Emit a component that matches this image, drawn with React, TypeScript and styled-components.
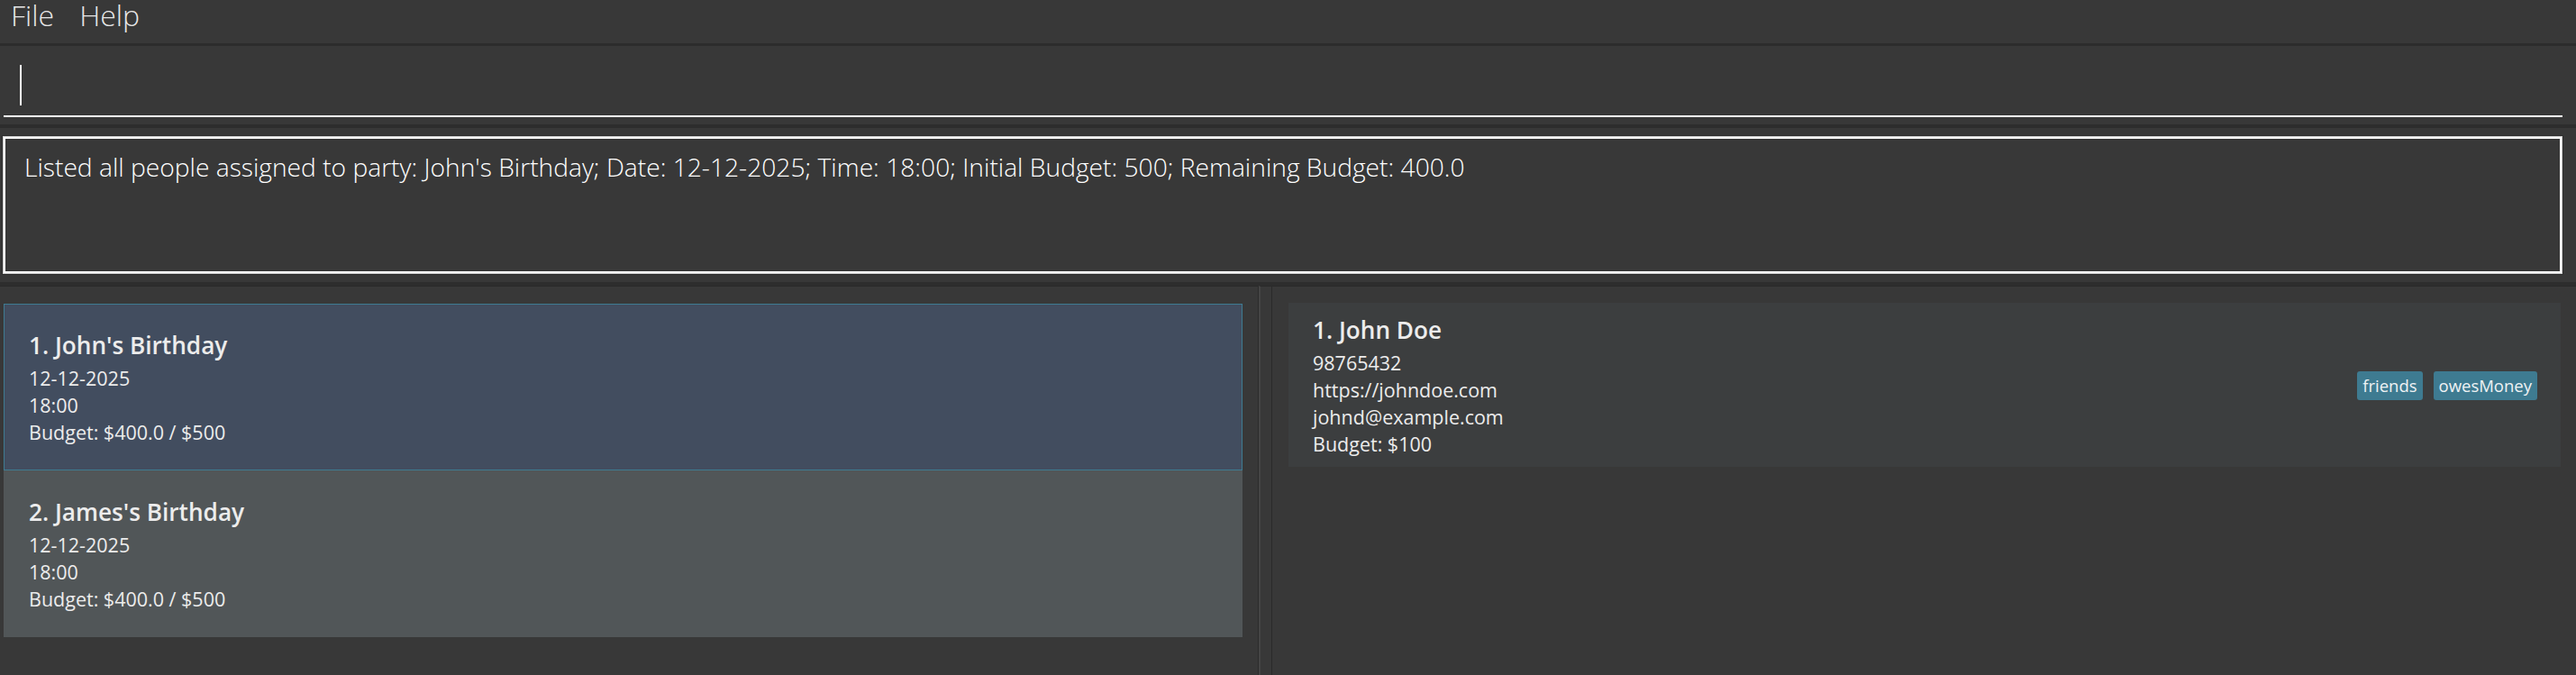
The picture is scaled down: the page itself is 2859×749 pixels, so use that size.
import React from "react";
import styled, { createGlobalStyle } from "styled-components";

const GlobalStyle = createGlobalStyle`
  html, body {
    margin: 0;
    padding: 0;
    background: #383838;
    overflow: hidden;
  }
  * { box-sizing: border-box; }
`;

const FONT = `"Open Sans", "Noto Sans", sans-serif`;

const Window = styled.div`
  width: 2859px;
  height: 749px;
  display: flex;
  flex-direction: column;
  background: #383838;
  font-family: ${FONT};
  color: #eeeeee;
`;

const MenuBar = styled.nav`
  height: 51px;
  flex: none;
  display: flex;
  align-items: flex-start;
  padding-left: 12px;
  border-bottom: 3px solid #2c2c2c;
`;

const MenuItem = styled.span`
  font-size: 32px;
  font-weight: 300;
  line-height: 34px;
  color: rgba(255, 255, 255, 0.9);
  margin-right: 28px;
`;

const CommandPane = styled.section`
  height: 91px;
  flex: none;
  display: flex;
  align-items: flex-end;
  padding: 0 15px 8px 4px;
  border-bottom: 4px solid #2d2d2d;
`;

const CommandField = styled.div`
  flex: 1;
  height: 70px;
  display: flex;
  align-items: center;
  padding-left: 18px;
  border-bottom: 2px solid #ffffff;
`;

const Caret = styled.span`
  width: 2px;
  height: 45px;
  background: #ffffff;
`;

const ResultPane = styled.section`
  height: 175px;
  flex: none;
  padding: 10px 16px 10px 4px;
  border-bottom: 4px solid #2d2d2d;
`;

const ResultBox = styled.div`
  height: 151px;
  border: 2px solid #ffffff;
  box-shadow: 0 0 0 1px #cfcfcf, 0 0 0 2px #2e2e2e;
  padding: 11px 0 0 21px;
  font-size: 28.2px;
  font-weight: 300;
  line-height: 40px;
  color: #ffffff;
  white-space: nowrap;
`;

const ListsArea = styled.main`
  flex: 1;
  display: flex;
  min-height: 0;
`;

const Panel = styled.section<{ $pad: string }>`
  flex: 1;
  display: flex;
  flex-direction: column;
  border-top: 1px solid #2a2a2a;
  padding: ${(p) => p.$pad};
`;

const LeftPanel = styled(Panel)`
  flex: none;
  width: 1397px;
  border-right: 1px solid #2c2c2c;
`;

const RightPanel = styled(Panel)`
  border-left: 1px solid #2a2a2a;
`;

const Divider = styled.div`
  width: 14px;
  flex: none;
  border-left: 2px solid #454545;
  border-top: 1px solid #2a2a2a;
`;

const PartyCard = styled.article<{ $variant: "selected" | "odd" }>`
  display: flex;
  flex-direction: column;
  padding: 27px 0 26px 27px;
  border: 1px solid
    ${(p) => (p.$variant === "selected" ? "#3e7b91" : "transparent")};
  background: ${(p) => (p.$variant === "selected" ? "#424d5f" : "#515658")};
`;

const PersonCard = styled.article`
  display: flex;
  align-items: center;
  padding: 12px 26px 10px 27px;
  background: #3c3e3f;
`;

const Info = styled.div`
  flex: 1;
  display: flex;
  flex-direction: column;
`;

const BigLabel = styled.div`
  font-size: 26.2px;
  font-weight: 600;
  line-height: 36px;
  color: #ececec;
  margin-bottom: 4px;
`;

const SmallLabel = styled.div`
  font-size: 21.5px;
  font-weight: 400;
  line-height: 30px;
  color: #ececec;
`;

const Tags = styled.div`
  display: flex;
  gap: 12px;
`;

const Tag = styled.span`
  font-size: 18.5px;
  line-height: 32px;
  padding: 0 6px;
  border-radius: 3px;
  background: #3e7b91;
  color: #eef2f4;
`;

type Party = { name: string; date: string; time: string; budget: string };

const parties: Party[] = [
  { name: "John's Birthday", date: "12-12-2025", time: "18:00", budget: "Budget: $400.0 / $500" },
  { name: "James's Birthday", date: "12-12-2025", time: "18:00", budget: "Budget: $400.0 / $500" },
];

export default function App() {
  return (
    <>
      <GlobalStyle />
      <Window>
        <MenuBar>
          <MenuItem>File</MenuItem>
          <MenuItem>Help</MenuItem>
        </MenuBar>
        <CommandPane>
          <CommandField>
            <Caret />
          </CommandField>
        </CommandPane>
        <ResultPane>
          <ResultBox>
            Listed all people assigned to party: John's Birthday; Date: 12-12-2025; Time: 18:00; Initial
            Budget: 500; Remaining Budget: 400.0
          </ResultBox>
        </ResultPane>
        <ListsArea>
          <LeftPanel $pad="19px 17px 0 4px">
            {parties.map((p, i) => (
              <PartyCard key={p.name} $variant={i === 0 ? "selected" : "odd"}>
                <BigLabel>
                  {i + 1}. {p.name}
                </BigLabel>
                <SmallLabel>{p.date}</SmallLabel>
                <SmallLabel>{p.time}</SmallLabel>
                <SmallLabel>{p.budget}</SmallLabel>
              </PartyCard>
            ))}
          </LeftPanel>
          <Divider />
          <RightPanel $pad="18px 17px 0 18px">
            <PersonCard>
              <Info>
                <BigLabel>1. John Doe</BigLabel>
                <SmallLabel>98765432</SmallLabel>
                <SmallLabel>https://johndoe.com</SmallLabel>
                <SmallLabel>johnd@example.com</SmallLabel>
                <SmallLabel>Budget: $100</SmallLabel>
              </Info>
              <Tags>
                <Tag>friends</Tag>
                <Tag>owesMoney</Tag>
              </Tags>
            </PersonCard>
          </RightPanel>
        </ListsArea>
      </Window>
    </>
  );
}
